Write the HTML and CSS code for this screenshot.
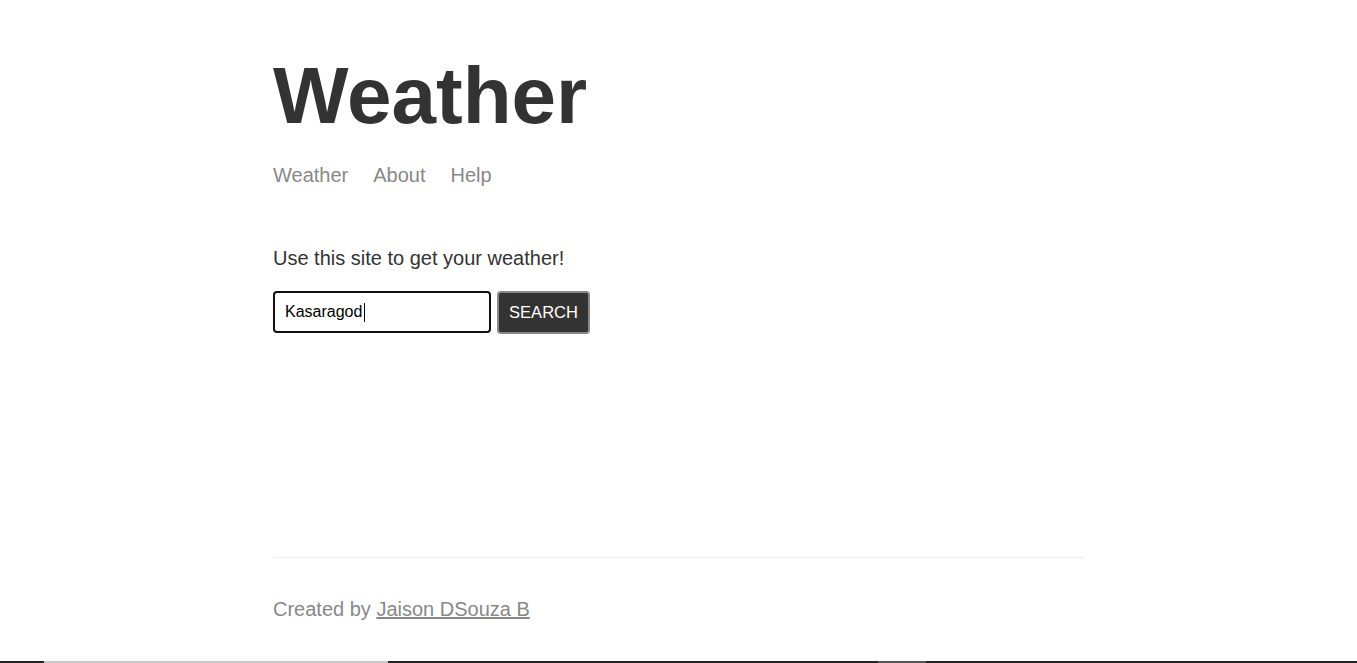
FILE: index.html
```html
<!DOCTYPE html>
<html lang="en">
<head>
<meta charset="utf-8">
<title>Weather</title>
<link rel="stylesheet" href="styles.css">
</head>
<body>
<div class="page">
  <main class="main">
    <header class="header">
      <h1 class="title">Weather</h1>
      <nav class="nav">
        <a class="nav-link" href="#">Weather</a>
        <a class="nav-link" href="#">About</a>
        <a class="nav-link" href="#">Help</a>
      </nav>
    </header>
    <p class="intro">Use this site to get your weather!</p>
    <form class="search-form">
      <div class="field">
        <input class="search-input" type="text" value="Kasaragod" placeholder="Location">
        <span class="caret"></span>
      </div>
      <button class="search-btn" type="button">SEARCH</button>
    </form>
  </main>
  <footer class="footer">
    <p class="footer-text">Created by <a class="footer-link" href="#">Jaison DSouza B</a></p>
  </footer>
</div>
<div class="edge-bar">
  <span class="seg seg-dark seg-a"></span>
  <span class="seg seg-light seg-b"></span>
  <span class="seg seg-dark seg-c"></span>
  <span class="seg seg-mid seg-d"></span>
  <span class="seg seg-dark seg-e"></span>
</div>
</body>
</html>
```
FILE: styles.css
```css
* { box-sizing: border-box; }
html, body { margin: 0; padding: 0; }
body {
  font-family: "Liberation Sans", Arial, sans-serif;
  color: #333;
  background: #fff;
}
.page {
  width: 811px;
  margin: 0 auto;
  min-height: 100vh;
  display: flex;
  flex-direction: column;
}
.main {
  flex: 1;
  padding-top: 50px;
}
.title {
  margin: 0;
  font-size: 80px;
  font-weight: bold;
  line-height: normal;
  color: #333;
}
.nav {
  margin-top: 22px;
  display: flex;
  gap: 25px;
}
.nav-link {
  font-size: 20px;
  line-height: 23px;
  color: #888;
  text-decoration: none;
}
.intro {
  margin: 60px 0 0;
  font-size: 20px;
  line-height: 23px;
}
.search-form {
  margin-top: 21px;
  display: flex;
  gap: 6px;
  align-items: stretch;
}
.field {
  position: relative;
  width: 218px;
}
.search-input {
  width: 218px;
  height: 42px;
  margin: 0;
  padding: 0 10px;
  border: 2px solid #111;
  border-radius: 4px;
  font-family: "Liberation Sans", Arial, sans-serif;
  font-size: 16px;
  color: #000;
  outline: none;
  background: #fff;
}
.caret {
  position: absolute;
  left: 91px;
  top: 12px;
  width: 1px;
  height: 19px;
  background: #000;
}
.search-btn {
  width: 93px;
  height: 43px;
  margin: 0;
  padding: 0;
  border: 2px solid #888;
  border-radius: 4px;
  background: #333;
  color: #fff;
  font-family: "Liberation Sans", Arial, sans-serif;
  font-size: 16.5px;
}
.footer {
  border-top: 1px solid #eee;
  padding: 40px 0 42px;
}
.footer-text {
  margin: 0;
  font-size: 20px;
  line-height: 23px;
  color: #888;
}
.footer-link {
  color: #888;
}
.edge-bar {
  position: fixed;
  left: 0;
  right: 0;
  bottom: 0;
  height: 2px;
  display: flex;
}
.seg { display: block; height: 2px; }
.seg-dark { background: #222; }
.seg-light { background: #c8c8c8; }
.seg-mid { background: #555; }
.seg-a { width: 44px; }
.seg-b { width: 344px; }
.seg-c { width: 490px; }
.seg-d { width: 48px; }
.seg-e { flex: 1; }
```
